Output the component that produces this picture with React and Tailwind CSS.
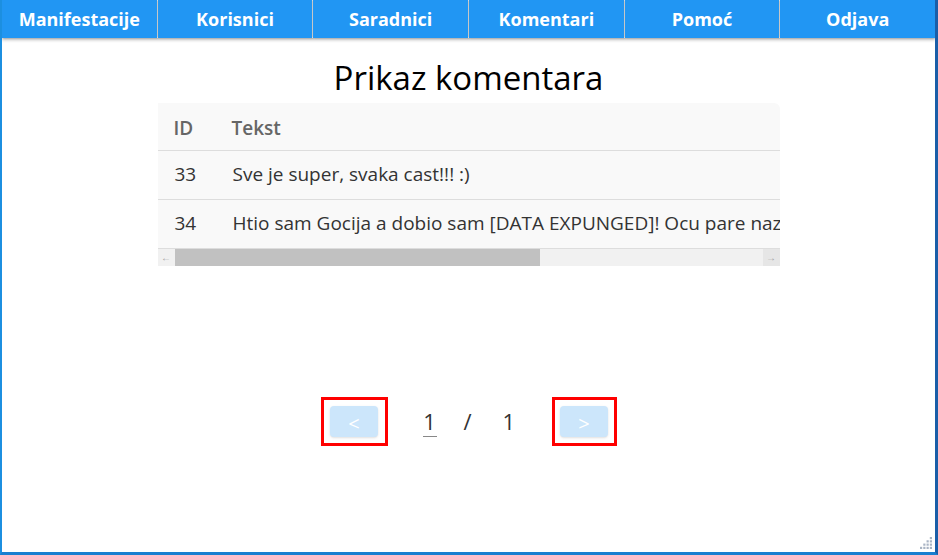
import React from 'react';

const tabs = ['Manifestacije', 'Korisnici', 'Saradnici', 'Komentari', 'Pomoć', 'Odjava'];

const comments = [
  { id: 33, tekst: 'Sve je super, svaka cast!!! :)' },
  { id: 34, tekst: 'Htio sam Gocija a dobio sam [DATA EXPUNGED]! Ocu pare nazad!!!' },
];

function ResizeGrip() {
  const dots = [
    [8, 0],
    [8, 3], [5, 3],
    [8, 6], [5, 6], [2, 6],
    [8, 9], [5, 9], [2, 9], [-1, 9],
  ];
  return (
    <svg className="absolute right-[3px] bottom-[3px]" width="12" height="12" viewBox="-1 0 11 11">
      {dots.map(([x, y], i) => (
        <rect key={i} x={x} y={y} width="2" height="2" fill="#a9b4c4" />
      ))}
    </svg>
  );
}

export default function App() {
  return (
    <div
      className="relative w-[938px] h-[555px] bg-white border-l-2 border-r-[3px] border-b-[3px] border-l-[#1c8fe0] border-r-[#1a5ea8] border-b-[#1a7fd0] overflow-hidden flex flex-col"
      style={{ fontFamily: '"Open Sans", "Noto Sans", sans-serif' }}
    >
      <nav className="flex gap-px h-[38px] shadow-[0_2px_3px_rgba(0,0,0,0.25)]">
        {tabs.map((t) => (
          <button
            key={t}
            className="flex-1 bg-[#2196f3] text-white font-bold text-[18px] shadow-[1px_0_2px_rgba(0,0,0,0.3)] flex items-center justify-center"
          >
            {t}
          </button>
        ))}
      </nav>

      <h1 className="text-center text-[33px] text-black mt-[18px] leading-[44px]">Prikaz komentara</h1>

      <div className="mx-auto w-[622px] mt-[3px] bg-[#f9f9f9] rounded-tr-md">
        <div className="overflow-hidden">
          <table className="text-left whitespace-nowrap min-w-[700px]">
            <thead>
              <tr className="h-[47px] border-b border-[#dddddd]">
                <th className="w-[74px] pl-[16px] pt-[3px] text-[19px] font-semibold text-[#666666]">ID</th>
                <th className="pt-[3px] text-[19px] font-semibold text-[#666666]">Tekst</th>
              </tr>
            </thead>
            <tbody>
              {comments.map((c) => (
                <tr key={c.id} className="h-[49px] border-b border-[#dddddd]">
                  <td className="pl-[17px] text-[19px] text-[#333333]">{c.id}</td>
                  <td className="pl-px text-[19px] text-[#333333]">{c.tekst}</td>
                </tr>
              ))}
            </tbody>
          </table>
        </div>
        <div className="flex h-[17px] bg-[#f1f1f1]">
          <div className="w-[17px] flex items-center justify-center text-[#a3a3a3] text-[10px] bg-[#f1f1f1]">←</div>
          <div className="w-[365px] bg-[#c1c1c1]"></div>
          <div className="flex-1"></div>
          <div className="w-[17px] flex items-center justify-center text-[#a3a3a3] text-[10px] bg-[#e6e6e6]">→</div>
        </div>
      </div>

      <div className="flex items-center justify-center mt-[131px]">
        <div className="border-[3px] border-[#ff0000] w-[67px] h-[49px] flex items-center justify-center">
          <button className="w-[48px] h-[31px] bg-[#cce6fb] rounded-sm text-white text-[20px] leading-none pt-[6px] shadow-sm">&lt;</button>
        </div>
        <div className="flex items-center w-[164px] text-[22px] text-[#333333]">
          <span className="ml-[35px] w-[14px] text-center border-b border-[#888888] leading-[30px]">1</span>
          <span className="ml-[26px] w-[10px] text-center">/</span>
          <span className="ml-[30px] w-[12px] text-center">1</span>
        </div>
        <div className="border-[3px] border-[#ff0000] w-[65px] h-[49px] flex items-center justify-center">
          <button className="w-[48px] h-[31px] bg-[#cce6fb] rounded-sm text-white text-[20px] leading-none pt-[6px] shadow-sm">&gt;</button>
        </div>
      </div>

      <ResizeGrip />
    </div>
  );
}
